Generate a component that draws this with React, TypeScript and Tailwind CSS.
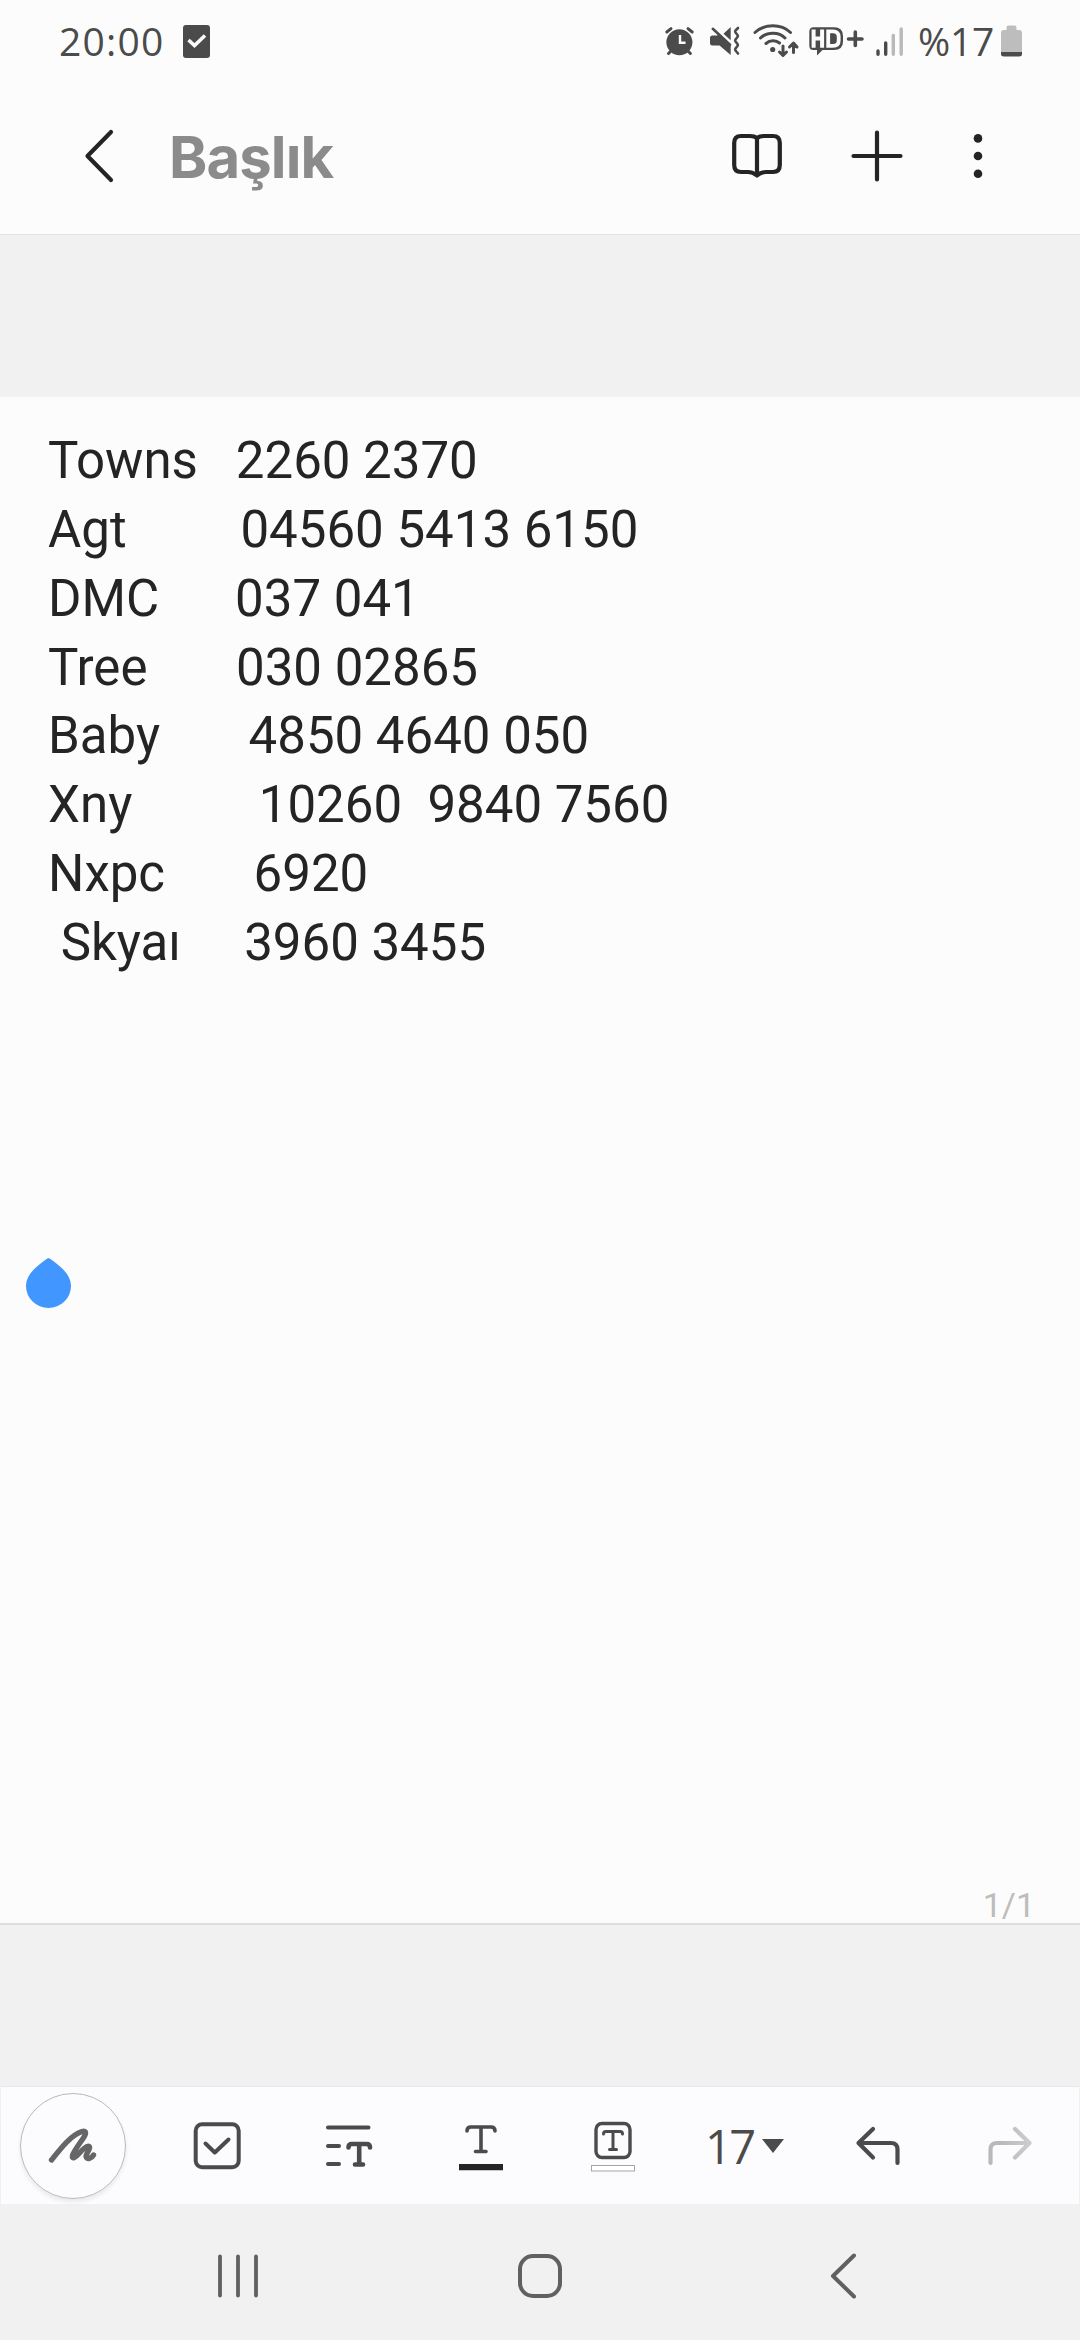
import type { ReactNode } from "react";

type IconProps = {
  box: string;
  w: number;
  h: number;
  color?: string;
  stroke?: number;
  className?: string;
  children: ReactNode;
};

function Icon({ box, w, h, color = "#4b4b4b", stroke = 4, className = "", children }: IconProps) {
  return (
    <svg
      viewBox={box}
      width={w}
      height={h}
      fill="none"
      stroke={color}
      strokeWidth={stroke}
      strokeLinecap="round"
      strokeLinejoin="round"
      className={`block shrink-0 overflow-visible ${className}`}
    >
      {children}
    </svg>
  );
}

const lines = [
  "Towns   2260 2370",
  "Agt         04560 5413 6150",
  "DMC      037 041",
  "Tree       030 02865",
  "Baby       4850 4640 050",
  "Xny          10260  9840 7560",
  "Nxpc       6920",
  " Skyaı     3960 3455",
];

function StatusBar() {
  return (
    <div className="flex h-[82px] shrink-0 items-center pl-[59px] font-['Open_Sans',sans-serif] text-[39px] leading-[82px] text-[#4b4b4b]">
      <span className="w-[124px] tracking-[1.2px]">20:00</span>
      <Icon box="183 25 27 33" w={27} h={33} stroke={0}>
        <rect x="183" y="25" width="27" height="33" rx="3" fill="#4b4b4b" />
        <path d="M188.500 40 L194.500 45.500 L205 35.500" stroke="#fcfcfc" strokeWidth="3.600" strokeLinecap="butt" strokeLinejoin="miter" />
      </Icon>
      <div className="ml-[455px] flex items-center">
        <Icon box="665 27 30 30" w={30} h={30} stroke={3}>
          <circle cx="679.4" cy="43.2" r="13" fill="#4b4b4b" stroke="none" />
          <path d="M666.800 33 L671 29.600 M692.200 33 L688 29.600 M668.500 54.500 L672 51 M690.400 54.500 L687 51" />
          <path d="M680 36 V43.800 H685.500" stroke="#fcfcfc" strokeWidth="2.400" strokeLinecap="butt" strokeLinejoin="miter" />
        </Icon>
        <Icon box="710 27 30 30" w={30} h={30} stroke={2.6} className="ml-[15px]">
          <path d="M710 39 Q710 36.500 712.500 36.500 H717 L719 35.500 L730.700 46 V56 L719.500 46.500 H712.500 Q710 46.500 710 44 Z M723.500 34.800 L730.700 28 V41.300 Z" fill="#4b4b4b" stroke="none" />
          <path d="M712.800 29.800 L730 45.800" />
          <path d="M738 29 L735.500 31.500 Q734.800 32.500 735.500 33.500 L737.500 36 Q738.300 37 737.500 38 L735.500 40.500 Q734.800 41.500 735.500 42.500 L737.500 45 Q738.300 46 737.500 47 L735.500 49.500 Q734.800 50.500 735.500 51.500 L738 54.500" />
        </Icon>
        <Icon box="753 25 46 34" w={46} h={34} stroke={3} className="ml-[13px]">
          <path d="M755 33.500 C765 24.500 781 24.500 790.500 33.500 M760.500 39 C767 32.500 779 32.500 785 39 M766 44.500 C770 41 776 41 779.500 44" />
          <circle cx="772.7" cy="50.500" r="2.600" fill="#4b4b4b" stroke="none" />
          <path d="M783 47 V56 M779.500 53 L783 56.500 L786.500 53 M793.500 53.500 V44.500 M789.500 48 L793.500 44 L797 48" />
        </Icon>
        <Icon box="809 28 55 28" w={55} h={28} stroke={2.6} className="ml-[10px]">
          <path d="M813.500 28.300 H834 Q843 28.300 843 37 V42.500 Q843 51 834 51 H822.500 L817 56.500 V51 H813.500 Q809.300 51 809.300 46.500 V32.800 Q809.300 28.300 813.500 28.300 Z" fill="#4b4b4b" stroke="none" />
          <path d="M813.600 30.500 V48.800 M822.100 30.500 V48.800 M813.500 39.600 H822.300" stroke="#fcfcfc" strokeWidth="4" strokeLinecap="butt" />
          <path d="M828.200 32.400 H833 Q838.700 32.400 838.700 38 V41.500 Q838.700 46.900 833 46.900 H828.200 Z" stroke="#fcfcfc" strokeWidth="3.800" strokeLinejoin="miter" />
          <path d="M848.500 40 H862 M855.300 33 V46.500" strokeWidth="3.600" />
        </Icon>
        <Icon box="876 27 27 29" w={27} h={29} stroke={3.4} className="ml-3">
          <path d="M878 51 V54.300 M885.700 43 V54.300" />
          <path d="M893.300 35.500 V54.300 M901.200 29 V54.300" stroke="#b9b9b9" />
        </Icon>
        <span className="ml-[15px] w-[83px] whitespace-nowrap tracking-[-0.300px]">%17</span>
        <Icon box="1000 25 21 32" w={21} h={32} stroke={0}>
          <path d="M1005.500 30 V27.500 Q1005.500 25.500 1007.500 25.500 H1013.500 Q1015.500 25.500 1015.500 27.500 V30 H1018 Q1021 30 1021 33 V52 H1000 V33 Q1000 30 1003 30 Z" fill="#bdbdbd" />
          <path d="M1000 52 H1021 V54 Q1021 56.500 1018 56.500 H1003 Q1000 56.500 1000 54 Z" fill="#4b4b4b" />
        </Icon>
      </div>
    </div>
  );
}

function Header() {
  return (
    <header className="flex h-[153px] shrink-0 items-center border-b border-[#e4e4e4] pb-[4px] pl-[86px]">
      <Icon box="86 130 27 52" w={27} h={52} color="#242424" stroke={4.200}>
        <path d="M111 132 L87.500 156 L111 180" />
      </Icon>
      <h1 className="ml-[56px] w-[563px] pt-[1px] font-['Inter',sans-serif] text-[58px] leading-[80px] font-bold tracking-[-0.900px] text-[#8b8b8b]">Başlık</h1>
      <Icon box="731 132 50 46" w={50} h={46} color="#242424" stroke={4.200}>
        <path d="M756 137 C753.500 135 751.500 135 749 135 H740 Q733.200 135 733.200 142 V164 Q733.200 171 740 171 H747 C751 171 753 172 756 174.500 C759 172 761 171 765 171 H772 Q778.800 171 778.800 164 V142 Q778.800 135 772 135 H763 C760.500 135 758.500 135 756 137 Z V174" />
      </Icon>
      <Icon box="850 130 52 52" w={52} h={52} color="#242424" stroke={4.200} className="ml-[69px]">
        <path d="M852.500 156 H899.500 M876 132.500 V179.500" />
      </Icon>
      <Icon box="972 133 10 46" w={10} h={46} color="none" className="ml-[70px]">
        <g fill="#242424">
          <circle cx="977" cy="138.400" r="4.300" />
          <circle cx="977" cy="156" r="4.300" />
          <circle cx="977" cy="173.700" r="4.300" />
        </g>
      </Icon>
    </header>
  );
}

function Page() {
  return (
    <main className="relative flex h-[1526px] shrink-0 flex-col justify-between bg-[#fcfcfc]">
      <div className="pt-[30px] pl-[48px] font-['Roboto',sans-serif] text-[51px] leading-[68.850px] whitespace-pre text-[#242424]">
        {lines.map((line) => (
          <div key={line}>{line}</div>
        ))}
      </div>
      <span className="pr-[45px] text-right font-['Roboto',sans-serif] text-[34px] leading-[36px] text-[#bdbdbd]">1/1</span>
      <div className="absolute top-[861px] left-[26px]">
        <Icon box="26 1258 45 50" w={45} h={50} stroke={0}>
          <path d="M48.500 1258 Q51 1259 57 1264 C66 1271 71 1278 71 1286 A22.500 22 0 0 1 26 1286 C26 1278 31 1271 40 1264 Q46 1259 48.500 1258 Z" fill="#4196ff" />
        </Icon>
      </div>
    </main>
  );
}

function Toolbar() {
  return (
    <div className="mx-px flex h-[118px] shrink-0 items-center border-t border-[#e8e8ea] bg-[#fcfcff] pl-[19px]">
      <div className="flex size-[106px] shrink-0 items-center justify-center rounded-full border border-[#b9b9b9] shadow-[0_3px_4px_rgba(0,0,0,0.08)]">
        <Icon box="49 2126 48 36" w={48} h={36} color="#666" stroke={5.400}>
          <path d="M51.500 2158 C61 2146 71 2133 82 2129.500 C87 2128 86.500 2132 82 2138 C77 2145 73 2151 72.500 2153.500 C71.500 2158 76 2155 79 2151.500 C83 2147 88 2142.500 89.500 2145 C90.500 2147 86 2151 86 2154.500 C86.500 2158.500 92 2156 93.500 2153" />
        </Icon>
      </div>
      <Icon box="193 2122 48 48" w={48} h={48} className="ml-[67px]">
        <rect x="195.700" y="2124.300" width="43" height="43" rx="6.500" />
        <path d="M205.500 2143.500 L214.800 2152.500 L228.500 2139.500" />
      </Icon>
      <Icon box="326 2124 47 44" w={47} h={44} className="ml-[85px]">
        <path d="M328 2127.500 H368.500 M328 2146 H339 M328 2164 H339" />
        <path d="M348.500 2147.500 Q348.500 2144 352 2144 H366.500 Q370 2144 370 2147.500 M359.200 2144 V2164.500 M355 2164.500 H363" strokeWidth="4.600" />
      </Icon>
      <Icon box="459 2123 44 47" w={44} h={47} stroke={3.600} className="ml-[86px]">
        <path d="M467 2132 Q467 2128 471 2128 H491 Q495 2128 495 2132 M481 2128 V2152.500 M475.500 2152.500 H486" />
        <path d="M459 2165 H503 V2171.300 H459 Z" fill="#242424" stroke="none" />
      </Icon>
      <Icon box="591 2120 44 51" w={44} h={51} stroke={3.400} className="ml-[88px]">
        <rect x="596" y="2123.500" width="34" height="34" rx="6" />
        <path d="M603.500 2134 Q603.500 2131.500 606 2131.500 H620 Q622.500 2131.500 622.500 2134 M613 2131.500 V2149.500 M609.500 2149.500 H616.500" strokeWidth="3" />
        <rect x="591.500" y="2165.500" width="43" height="5.500" fill="#fff" stroke="#a5a5a5" strokeWidth="1" strokeLinejoin="miter" />
      </Icon>
      <span className="ml-[70px] w-[57px] pt-[1px] font-['Open_Sans',sans-serif] text-[47px] leading-[60px] tracking-[-2.500px] text-[#4b4b4b]">17</span>
      <Icon box="762 2140 22 14" w={22} h={14} stroke={0}>
        <path d="M762 2140 H784 L773 2154 Z" fill="#4b4b4b" />
      </Icon>
      <Icon box="855 2127 44 38" w={44} h={38} stroke={4.200} className="ml-[72px]">
        <path d="M872 2129 L857.500 2143 L872 2157.500 M857.500 2143 H890 Q896.500 2143 896.500 2149.500 V2163" />
      </Icon>
      <Icon box="987 2127 44 38" w={44} h={38} stroke={4.200} color="url(#redoFade)" className="ml-[88px]">
        <defs>
          <linearGradient id="redoFade" gradientUnits="userSpaceOnUse" x1="987" y1="0" x2="1031" y2="0">
            <stop offset="0.300" stopColor="#b9b9b9" />
            <stop offset="1" stopColor="#cecece" />
          </linearGradient>
        </defs>
        <path d="M1014 2129 L1028.500 2143 L1014 2157.500 M1028.500 2143 H996 Q989.500 2143 989.500 2149.500 V2163" />
      </Icon>
    </div>
  );
}

function NavigationBar() {
  return (
    <nav className="flex h-[136px] shrink-0 items-center pt-[8px] pl-[218px]">
      <Icon box="218 2254 40 44" w={40} h={44} color="#606060" stroke={3.800}>
        <path d="M220 2256.500 V2295.500 M238 2256.500 V2295.500 M256 2256.500 V2295.500" />
      </Icon>
      <Icon box="518 2254 44 44" w={44} h={44} color="#606060" stroke={4} className="ml-[260px]">
        <rect x="520" y="2256" width="40" height="40" rx="13" />
      </Icon>
      <Icon box="831 2253 25 46" w={25} h={46} color="#606060" stroke={4} className="ml-[269px]">
        <path d="M854 2255.500 L833 2276 L854 2296.500" />
      </Icon>
    </nav>
  );
}

export default function App() {
  return (
    <div className="flex h-[2340px] w-[1080px] flex-col overflow-hidden bg-[#f1f1f1]">
      <div className="bg-[#fcfcfc]">
        <StatusBar />
        <Header />
      </div>
      <div className="h-[162px] shrink-0" />
      <Page />
      <div className="h-[163px] shrink-0 border-t-2 border-[#dedede]" />
      <Toolbar />
      <NavigationBar />
    </div>
  );
}
